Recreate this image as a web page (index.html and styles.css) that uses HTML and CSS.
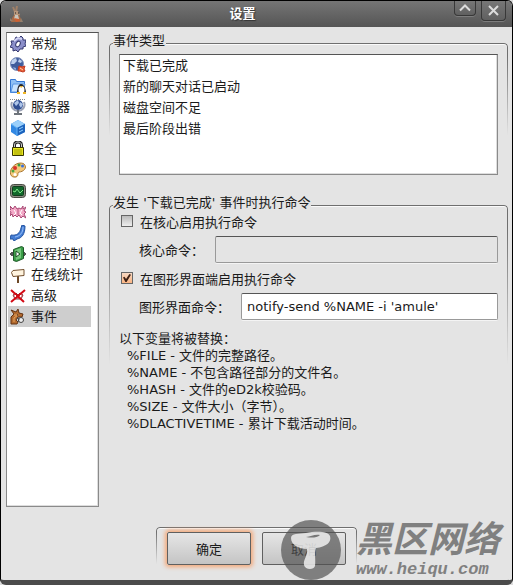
FILE: index.html
```
<!DOCTYPE html>
<html lang="zh-CN">
<head>
    <meta charset="UTF-8">
    <meta name="viewport" content="width=device-width, initial-scale=1.0">
    <title>设置</title>
    <link rel="stylesheet" href="styles.css">
</head>
<body>
    <div class="window">
        <header class="titlebar">
            <svg class="app-icon" viewBox="0 0 16 18">
                <path d="M4 1l2 5M8 0L7 6" stroke="#a08068" stroke-width="2"/>
                <path d="M5 5l4 0 2 4-2 1-4-1z" fill="#b8977c"/>
                <path d="M5 9l5 0 2 4 1 3H2l1-4z" fill="#a56b48"/>
                <path d="M6 9h3l1 4H5z" fill="#c9c6bd"/>
                <path d="M5 12l5 1 1 2-4 1z" fill="#cf6031"/>
                <path d="M1 12l3 3H1zM12 12l2 4h-3z" fill="#94806e"/>
                <path d="M6 7h1M9 7h1" stroke="#222"/>
            </svg>
            <h1>设置</h1>
            <div class="window-buttons">
                <button class="shade-btn" type="button" aria-label="收起">
                    <svg width="12" height="8" viewBox="0 0 12 8"><path d="M1 6.500l5-5 5 5"/></svg>
                </button>
                <button class="quit-btn" type="button" aria-label="关闭">
                    <svg width="11" height="11" viewBox="0 0 11 11"><path d="M1 1l9 9M10 1l-9 9"/></svg>
                </button>
            </div>
        </header>

        <div class="content">
            <nav class="sidebar">
                <button type="button">
                    <svg viewBox="0 0 16 16">
                        <path d="M6 1l3 1 2-2 2 2 0 2 3 0-1 4 1 2-3 1 0 2-3 0-2 3-2-2-3 1 0-3-3-1 2-3-1-3 3 0z" fill="#8b8fca" stroke="#34386f"/>
                        <path d="M4 5l4-3 4 1" fill="none" stroke="#d2d5f4" stroke-width="2"/>
                        <ellipse cx="8" cy="8" rx="2" ry="3" transform="rotate(30 8 8)" fill="#fff" stroke="#34386f"/>
                    </svg>
                    常规
                </button>
                <button type="button">
                    <svg viewBox="0 0 16 16">
                        <circle cx="7" cy="7" r="6.500" fill="#3f5c9c" stroke="#8393bd"/>
                        <path d="M2 3l4-2 1 3-3 3-3 0zM9 2l3 2-1 2-3-1z" fill="#bdd0ee"/>
                        <path d="M3 10l3 1 0 2-2-1z" fill="#8ea9d8"/>
                        <path d="M9 9l3 1 3-1-1 3 1 2-2 1-3-1-2 0z" fill="#e35b34" stroke="#c23a20"/>
                        <path d="M10 11l3 2" stroke="#ffd0a8"/>
                    </svg>
                    连接
                </button>
                <button type="button">
                    <svg viewBox="0 0 16 16">
                        <path d="M.5 1.500h5l1 2h8v11h-14z" fill="#8fc0f5" stroke="#3476d2"/>
                        <path d="M3 6h12l-2 8H1z" fill="#c8e3ff" stroke="#5b98e4"/>
                        <path d="M7 15c0-4 1-9 4-9s5 5 5 9z" fill="#25262c"/>
                        <ellipse cx="11.500" cy="12" rx="3" ry="4" fill="#fff"/>
                        <path d="M10 8l3 0-2 2zM7 14h3v2H7zM13 14h3v2h-3z" fill="#f1b622"/>
                    </svg>
                    目录
                </button>
                <button type="button">
                    <svg viewBox="0 0 16 16">
                        <path d="M0 .5h16" stroke="#888" stroke-dasharray="1 1"/>
                        <path d="M2 3c-2 5 2 9 6 9s8-4 6-9" fill="none" stroke="#9ca2b5" stroke-width="2"/>
                        <circle cx="8" cy="6" r="5" fill="#304e92"/>
                        <path d="M4 4l4-3 1 3-3 3zM10 3l3 2-2 4-2-3z" fill="#aec5e9"/>
                        <path d="M8 11v4M4 15h8" stroke="#6e747b" stroke-width="2"/>
                    </svg>
                    服务器
                </button>
                <button type="button">
                    <svg viewBox="0 0 16 16">
                        <path d="M1 4l7-4 7 4v8l-8 4-6-4z" fill="#3288e3"/>
                        <path d="M1 4l7-4 7 4-8 4z" fill="#9bd0fb"/>
                        <path d="M7 8l8-4v8l-8 4z" fill="#1d63bd"/>
                        <path d="M9 9l4-2M9 12l4-2" stroke="#8fd0ff"/>
                        <path d="M1 4l6 4v8" fill="none" stroke="#5eb0f5"/>
                    </svg>
                    文件
                </button>
                <button type="button">
                    <svg viewBox="0 0 16 16">
                        <path d="M4.500 8V4c0-4 7-4 7 0v4" fill="none" stroke="#222" stroke-width="3"/>
                        <path d="M4.500 8V4c0-4 7-4 7 0v4" fill="none" stroke="#ccc"/>
                        <path d="M2.500 6.500h11v8h-11z" fill="#e9e721" stroke="#383600"/>
                        <path d="M4 9h8M4 11h8M4 13h8" stroke="#9d9b00"/>
                    </svg>
                    安全
                </button>
                <button type="button">
                    <svg viewBox="0 0 16 16">
                        <path d="M2 6C5 1 11 0 14 2c4 4-1 8-5 8-2 1 0 4-3 5-6 1-7-5-4-9z" fill="#f3c87c" stroke="#a8752f"/>
                        <circle cx="5" cy="6" r="2" fill="#d93229"/>
                        <circle cx="9" cy="3" r="1.500" fill="#30a148"/>
                        <circle cx="12.500" cy="4" r="1.500" fill="#366fe0"/>
                        <circle cx="3" cy="9" r="1.500" fill="#4ba43e"/>
                        <circle cx="5" cy="12.500" r="1.500" fill="#fff"/>
                    </svg>
                    接口
                </button>
                <button type="button">
                    <svg viewBox="0 0 16 16">
                        <rect x=".5" y="1.500" width="15" height="13" rx="3" fill="#8c8c82" stroke="#484a43"/>
                        <rect x="2.500" y="3.500" width="11" height="9" rx="1" fill="#12682b" stroke="#103e1d"/>
                        <path d="M3 8l2 1 2-3 3 4 3-3" fill="none" stroke="#7ee887"/>
                    </svg>
                    统计
                </button>
                <button type="button">
                    <svg viewBox="0 0 16 16">
                        <path d="M0 2l3 3 2-3 2 3 2-1 2 1 2-3 0 3 3-2-2 4 2 1-2 2 2 4-3-2-2 2-2-3-2 2-2-2-2 2-1-3-2 2 1-4-2-1 2-2z" fill="#f3a9c7" stroke="#a84773"/>
                        <path d="M4 6l2 3-2 2M12 6l-2 3 2 2" fill="none" stroke="#fff"/>
                        <path d="M8 5v6" stroke="#ba5681"/>
                    </svg>
                    代理
                </button>
                <button type="button">
                    <svg viewBox="0 0 16 16">
                        <path d="M12 0l3 1c0 8-3 12-8 13l-3 2-1-2-3 0 1-4c6 1 9-2 10-7z" fill="#447dd4" stroke="#21529f"/>
                        <path d="M13 2c0 6-3 9-8 10" fill="none" stroke="#9ac2fa"/>
                    </svg>
                    过滤
                </button>
                <button type="button">
                    <svg viewBox="0 0 16 16">
                        <path d="M0 8h16M2 6v4M14 6v4" stroke="#555" stroke-width="2"/>
                        <path d="M3.500 3.500l8-3 2 1v11l-7 3-3-1z" fill="#3b9d48" stroke="#1c5927"/>
                        <path d="M5 4l6-2v10l-5 2z" fill="#74c77b"/>
                        <path d="M6 5l4 3-4 3z" fill="#fff" stroke="#164d1f"/>
                    </svg>
                    远程控制
                </button>
                <button type="button">
                    <svg viewBox="0 0 16 16">
                        <path d="M8 8v8" stroke="#6d4826" stroke-width="2"/>
                        <path d="M1.500 5.500L3 3.500l11-1v6L3 9.500z" fill="#fff4df" stroke="#73502f"/>
                    </svg>
                    在线统计
                </button>
                <button type="button">
                    <svg viewBox="0 0 16 16">
                        <path d="M3 7l3-2 2 2 2-2 3 2-2 4H5z" fill="#f2a6ac" stroke="#8c363d"/>
                        <path d="M1 2l13 12M15 2L1 14" stroke="#d30914" stroke-width="2"/>
                        <path d="M5 8h1M10 8h1" stroke="#fff" stroke-width="2"/>
                    </svg>
                    高级
                </button>
                <button class="selected" type="button">
                    <svg viewBox="0 0 16 16">
                        <path d="M4 5L1 1l5 2 2-3 1 4 4 1-1 3-4 0-2 3 2 2-1 2H1L1 8z" fill="#b36a2e" stroke="#633313"/>
                        <path d="M4 6l4 0-4 3 0 4" fill="none" stroke="#e5a460"/>
                        <circle cx="11" cy="11" r="2.500" fill="#eee" stroke="#444"/>
                        <path d="M7 9l2 1-1 3" fill="none" stroke="#444"/>
                        <path d="M7 6h1" stroke="#111"/>
                    </svg>
                    事件
                </button>
            </nav>

            <main class="panel">
                <fieldset class="group">
                    <legend>事件类型</legend>
                    <select class="event-list" size="5" aria-label="事件类型">
                        <option>下载已完成</option>
                        <option>新的聊天对话已启动</option>
                        <option>磁盘空间不足</option>
                        <option>最后阶段出错</option>
                    </select>
                </fieldset>

                <fieldset class="group">
                    <legend>发生 '下载已完成' 事件时执行命令</legend>
                    <div class="check-row">
                        <input type="checkbox" id="core-enable">
                        <label for="core-enable">在核心启用执行命令</label>
                    </div>
                    <div class="command-row">
                        <label for="core-command">核心命令：</label>
                        <input type="text" id="core-command" disabled>
                    </div>
                    <div class="check-row">
                        <input type="checkbox" id="gui-enable" checked>
                        <label for="gui-enable">在图形界面端启用执行命令</label>
                    </div>
                    <div class="command-row">
                        <label for="gui-command">图形界面命令：</label>
                        <input type="text" id="gui-command" value="notify-send %NAME -i 'amule'">
                    </div>
                    <div class="variables">
                        <p>以下变量将被替换：</p>
                        <ul>
                            <li>%FILE - 文件的完整路径。</li>
                            <li>%NAME - 不包含路径部分的文件名。</li>
                            <li>%HASH - 文件的eD2k校验码。</li>
                            <li>%SIZE - 文件大小（字节）。</li>
                            <li>%DLACTIVETIME - 累计下载活动时间。</li>
                        </ul>
                    </div>
                </fieldset>
            </main>
        </div>

        <footer class="actions">
            <div class="action-frame">
                <button class="ok-btn" type="button">确定</button>
                <button type="button">取消</button>
            </div>
        </footer>

        <div class="watermark">
            <svg width="60" height="60" viewBox="0 0 60 60">
                <circle cx="30" cy="30" r="30" fill="#505050" fill-opacity=".68"/>
                <path d="M10 18c0-5 8-4 15-5 10-2 22-2 24 3 2 6-4 11-14 12-2 6 0 11-1 18-1 4-10 4-11-1-1-6 4-9 3-16-8 0-16-4-16-11z" fill="#fff" fill-opacity=".75"/>
                <path d="M25 17c5 0 8-3 14-2-3 3-9 3-14 2z" fill="#777"/>
            </svg>
            <div class="watermark-text">
                <span class="site-name">黑区网络</span>
                <span class="site-url">www.heiqu.com</span>
            </div>
        </div>
    </div>
</body>
</html>
```
FILE: styles.css
```
* {
    box-sizing: border-box;
}

body {
    margin: 0;
    background-color: #ddd;
    color: #1a1a1a;
    font-family: 'DejaVu Sans', 'Noto Sans CJK SC', sans-serif;
    font-size: 13px;
}

button,
input,
select {
    font: inherit;
    color: inherit;
}

.window {
    position: relative;
    display: flex;
    flex-direction: column;
    min-height: 100vh;
    background-color: #e4e4e4;
    border: 1px solid #000;
    border-bottom: 5px solid #4b4b4b;
    border-radius: 6px;
    overflow: hidden;
}

/* Title bar */
.titlebar {
    display: grid;
    grid-template-columns: 55px 1fr 83px;
    height: 26px;
    background: linear-gradient(#757575, #555);
}

.app-icon {
    width: 16px;
    height: 18px;
    margin: 5px 0 0 8px;
}

.titlebar h1 {
    margin: 0;
    color: #fff;
    font-size: 13px;
    line-height: 26px;
    text-align: center;
    text-shadow: 1px 1px 1px #333;
}

.window-buttons {
    display: flex;
    justify-content: flex-end;
    align-items: flex-start;
    gap: 5px;
    padding-right: 6px;
}

.window-buttons button {
    display: flex;
    justify-content: center;
    align-items: center;
    padding: 0;
    background: linear-gradient(#777, #606060);
    border: 1px solid #383838;
    border-top: none;
    border-radius: 0 0 4px 4px;
    box-shadow: 0 1px 0 #7d7d7d;
}

.window-buttons path {
    fill: none;
    stroke: #dcdcdc;
    stroke-width: 2;
}

.shade-btn {
    width: 22px;
    height: 15px;
}

.quit-btn {
    width: 25px;
    height: 20px;
}

/* Sidebar */
.content {
    display: flex;
    flex: 1;
    gap: 10px;
    padding: 5px 4px 0 5px;
}

.sidebar {
    display: flex;
    flex-direction: column;
    flex: 0 0 93px;
    padding: 0 1px;
    background-color: #fff;
    border: 1px solid #8a8a8a;
    border-top-color: #555;
    box-shadow: inset -1px -1px 0 #ddd;
}

.sidebar button {
    display: flex;
    align-items: center;
    gap: 5px;
    width: 83px;
    height: 21px;
    padding: 0 2px;
    background: none;
    border: none;
    line-height: 21px;
    white-space: nowrap;
}

.sidebar svg {
    flex: none;
    width: 16px;
    height: 16px;
}

.sidebar .selected {
    background-color: #cecece;
}

/* Groups */
.panel {
    display: flex;
    flex-direction: column;
    flex: 1;
    gap: 19px;
    min-width: 0;
}

.group {
    position: relative;
    min-width: 0;
    margin: 0;
    padding: 0 10px;
    border: none;
}

/* frame that fades out towards the bottom */
.group::before,
.action-frame::before {
    content: "";
    position: absolute;
    inset: -7px 0 0;
    border: 1px solid #6f6f6f;
    border-bottom: none;
    border-radius: 4px 4px 0 0;
    box-shadow: inset 0 1px 0 #fafafa;
    -webkit-mask-image: linear-gradient(#000 10%, transparent 70%);
    mask-image: linear-gradient(#000 10%, transparent 70%);
    pointer-events: none;
}

.group legend {
    position: relative;
    z-index: 1;
    margin-left: -6px;
    padding: 0 1px 0 0;
    background-color: #e4e4e4;
    line-height: 18px;
}

.event-list {
    display: block;
    width: 100%;
    height: 121px;
    margin-top: 4px;
    padding: 0 1px;
    background-color: #fff;
    border: 1px solid #8a8a8a;
    border-top-color: #555;
    border-radius: 0;
    box-shadow: inset -1px -1px 0 #ddd;
    outline: none;
    overflow: hidden;
}

.event-list option {
    height: 21px;
    padding: 0 2px;
    line-height: 21px;
}

.check-row {
    display: flex;
    align-items: center;
    gap: 7px;
    height: 18px;
    padding-left: 2px;
}

.check-row input {
    display: grid;
    place-items: center;
    width: 12px;
    height: 12px;
    margin: 0;
    appearance: none;
    background: linear-gradient(#bbb, #eee);
    border: 1px solid #666;
}

.check-row input:checked {
    background: linear-gradient(#f6d8c2, #fbb583);
}

.check-row input:checked::before {
    content: "";
    width: 8px;
    height: 8px;
    background-color: #3c2014;
    clip-path: polygon(0 45%, 18% 35%, 38% 62%, 80% 0, 100% 8%, 45% 100%, 30% 100%);
}

.command-row {
    display: flex;
    align-items: center;
    padding-left: 20px;
    margin: 6px 0;
}

.command-row label {
    flex: none;
    margin-right: 11px;
}

.command-row input {
    flex: 1;
    min-width: 0;
    height: 27px;
    padding: 0 5px;
    background-color: #fff;
    border: 1px solid #999;
    border-top-color: #555;
    border-radius: 2px;
    box-shadow: 0 1px 0 #f4f4f4;
    outline: none;
}

.command-row input:disabled {
    background-color: #e4e4e4;
}

.variables {
    padding-top: 4px;
    line-height: 17px;
}

.variables p {
    margin: 0;
}

.variables ul {
    margin: 0;
    padding: 0 0 0 8px;
    list-style: none;
}

.variables li {
    height: 17px;
}

/* Bottom buttons */
.actions {
    display: flex;
    justify-content: center;
    padding-top: 20px;
}

.action-frame {
    position: relative;
    display: flex;
    gap: 11px;
    padding: 5px 11px 15px;
}

.action-frame::before {
    inset: 0;
}

.action-frame button {
    position: relative;
    width: 84px;
    height: 33px;
    padding: 0;
    background: linear-gradient(#e6e6e6, #c4c4c4);
    border: 1px solid #606060;
    border-radius: 2px;
}

.action-frame .ok-btn {
    box-shadow: 0 0 4px 2px #f5a878;
}

/* Watermark */
.watermark {
    position: absolute;
    right: 12px;
    bottom: 0;
    display: flex;
    gap: 15px;
    color: #808080;
    pointer-events: none;
}

.watermark-text {
    display: flex;
    flex-direction: column;
    font-style: italic;
    font-weight: bold;
}

.site-name {
    font-family: 'Liberation Sans', 'Noto Sans CJK SC', sans-serif;
    font-size: 36px;
    line-height: 40px;
}

.site-url {
    font-family: 'Liberation Mono', monospace;
    font-size: 17px;
    line-height: 20px;
}
```
